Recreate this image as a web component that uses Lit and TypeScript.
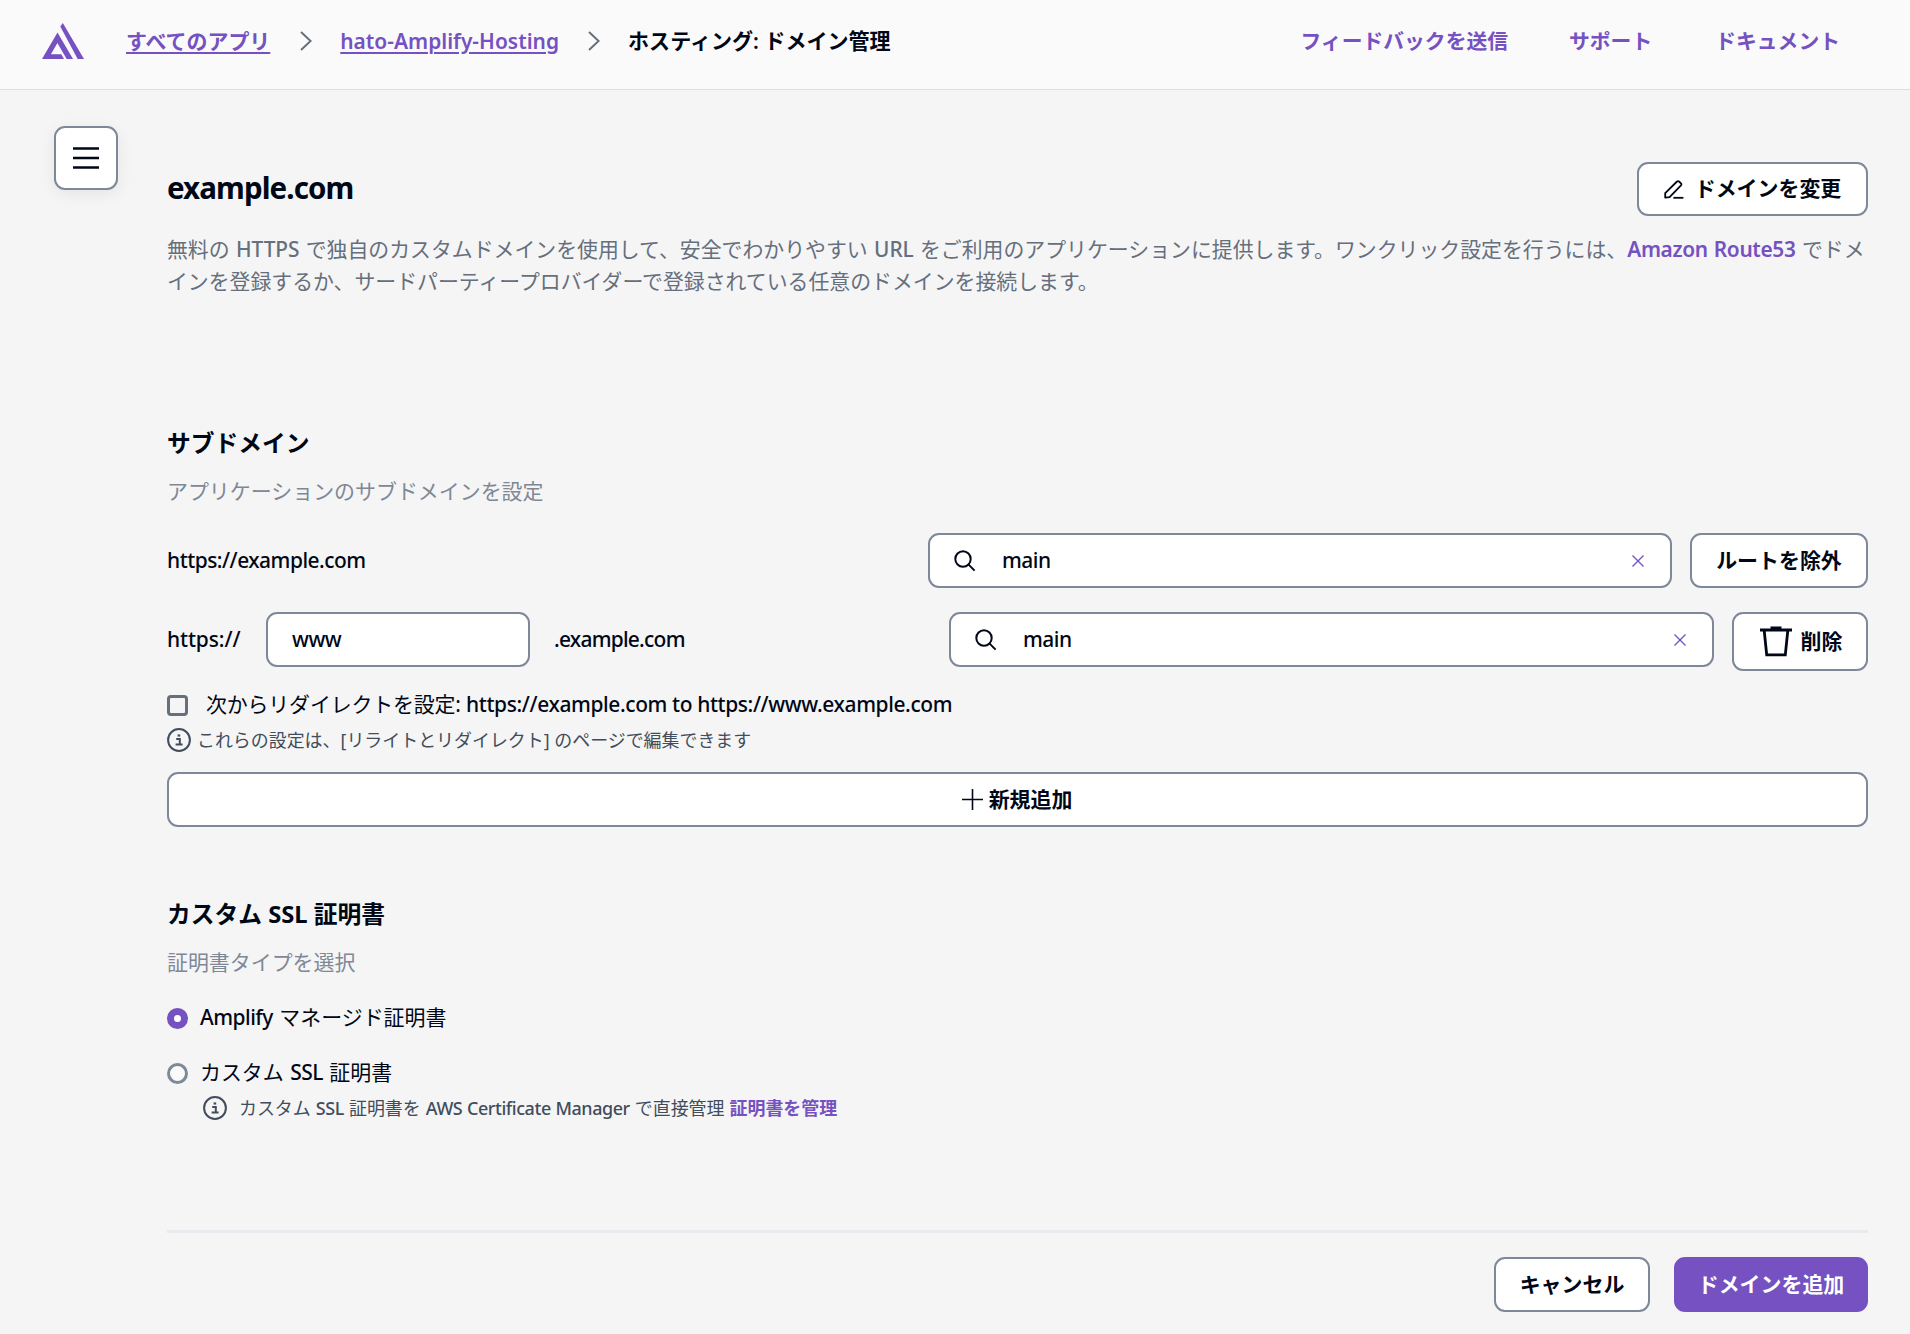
import { LitElement, html, css } from "lit";
import { customElement } from "lit/decorators.js";

const infoIcon = html`<svg class="info" viewBox="0 0 24 24" fill="none">
  <circle cx="12" cy="12" r="10.9" stroke="#414d5c" stroke-width="2" />
  <path d="M9.2 10.9h3.6v5.6M8.6 16.4h7" stroke="#414d5c" stroke-width="2" />
  <path d="M10.6 6.4h2.6v2.2h-2.6z" fill="#414d5c" />
</svg>`;

const chevron = html`<svg class="chevron" viewBox="0 0 12 20" fill="none">
  <path d="M1 1l9.6 9L1 19" stroke="#656f7d" stroke-width="2" />
</svg>`;

const searchIcon = html`<svg class="search" viewBox="0 0 22 22" fill="none" stroke="#000716">
  <circle cx="9" cy="9" r="7.7" stroke-width="2" />
  <path d="M14.4 14.4l6.2 6.2" stroke-width="2" />
</svg>`;

const clearIcon = html`<svg class="clear" viewBox="0 0 12 12" fill="none">
  <path d="M.5.5l11 11M11.5.5l-11 11" stroke="#7551c2" stroke-width="1.4" />
</svg>`;

@customElement("app-root")
export class AppRoot extends LitElement {
  static styles = css`
    :host {
      display: block;
      height: 1334px;
      overflow: hidden;
      background: #f5f5f5;
      color: #000716;
      font-family: "Noto Sans", "Noto Sans CJK JP", sans-serif;
      font-size: 20.95px;
      line-height: 32px;
    }
    * { box-sizing: border-box; }
    svg { display: block; flex: none; }
    a { color: #7551c2; font-weight: 600; text-decoration: none; }
    header {
      height: 90px;
      padding: 0 70px 8px 42px;
      border-bottom: 1px solid #dedee3;
      background: #fafafa;
      display: flex;
      align-items: center;
      white-space: nowrap;
    }
    .logo { width: 42px; height: 37px; margin: 2px 42px 0 0; }
    .crumb { text-decoration: underline; text-decoration-thickness: 2px; text-underline-offset: 3px; }
    .chevron { width: 12px; height: 20px; margin: 0 28px 0 30px; }
    .crumb + .chevron ~ .chevron { margin-left: 29px; }
    .current { font-weight: 600; font-size: 21.05px; }
    nav { margin-left: auto; display: flex; font-size: 20.8px; }
    .support { margin: 0 63px 0 61px; }
    .body { display: flex; padding: 36px 42px 0 54px; }
    .menu {
      width: 64px;
      height: 64px;
      flex: none;
      margin-right: 49px;
      border: 2px solid #7d8998;
      border-radius: 11px;
      background: #fff;
      box-shadow: 0 4px 16px rgba(0, 7, 22, 0.07);
      display: flex;
      align-items: center;
      justify-content: center;
    }
    main { flex: 1; min-width: 0; display: flex; flex-direction: column; }
    .head { display: flex; justify-content: space-between; align-items: center; margin-top: 36px; }
    h1, h2, p { margin: 0; }
    h1 { font-size: 29.5px; font-weight: 700; line-height: 40px; letter-spacing: -0.9px; padding-bottom: 2px; }
    h2 { font-size: 23.75px; font-weight: 700; line-height: 32px; }
    .en { font-weight: 500; letter-spacing: -0.5px; }
    .caps { font-weight: 500; letter-spacing: -0.1px; }
    .en-s { font-weight: 500; letter-spacing: -0.42px; }
    .url { font-weight: 500; letter-spacing: -0.38px; }
    .tail { letter-spacing: -0.75px; }
    .r53 { letter-spacing: -0.35px; }
    .btn {
      height: 55px;
      padding: 0 24px;
      border: 2px solid #7d8998;
      border-radius: 11px;
      background: #fff;
      font-weight: 600;
      display: flex;
      align-items: center;
      justify-content: center;
      white-space: nowrap;
    }
    .btn span { padding-bottom: 2px; }
    .edit { width: 231px; height: 54px; gap: 11px; }
    .lede { margin-top: 17px; color: #656f7d; font-size: 20.88px; word-spacing: 1px; line-height: 32px; white-space: nowrap; }
    .sub { margin-top: 130px; }
    .hint { color: #7f8896; margin: 16px 0 1px; }
    .row { display: flex; align-items: flex-start; }
    .root-row { margin-top: 24px; padding-top: 1px; }
    .sub-row { margin-top: 24px; }
    .label { line-height: 54px; }
    .scheme { width: 75px; letter-spacing: -0.1px; }
    .field {
      height: 55px;
      border: 2px solid #7d8998;
      border-radius: 11px;
      background: #fff;
      padding: 0 26px 0 24px;
      display: flex;
      align-items: center;
    }
    .field .en { padding-bottom: 1px; }
    .wide { margin-left: auto; }
    .w1 { width: 744px; margin-right: 18px; }
    .w2 { width: 765px; margin-right: 18px; }
    .prefix { width: 264px; margin: 0 24px 0 24px; }
    .search { width: 22px; height: 22px; margin-right: 26px; }
    .clear { width: 12px; height: 12px; margin-left: auto; }
    .exclude { width: 178px; }
    .delete { width: 136px; height: 59px; gap: 9px; padding: 0 23px 0 25px; }
    .check { display: flex; align-items: center; height: 32px; margin-top: 18px; }
    .check .text { padding-bottom: 2px; letter-spacing: -0.16px; }
    .box { width: 21px; height: 21px; border: 3px solid #656f7d; border-radius: 4px; margin-right: 18px; }
    .note { display: flex; align-items: center; font-size: 17.95px; color: #414d5c; }
    .info { width: 24px; height: 24px; }
    .note-a { height: 32px; gap: 6px; margin-top: 3px; }
    .add { margin-top: 16px; gap: 6px; padding-right: 25px; }
    .ssl { margin-top: 71px; }
    .radio { display: flex; align-items: center; height: 32px; gap: 12px; }
    .radio .text { padding-bottom: 2px; word-spacing: 1px; }
    .first { margin-top: 23px; }
    .second { margin-top: 23px; }
    .dot { width: 21px; height: 21px; border-radius: 50%; border: 3px solid #7d8998; background: #fafafa; }
    .on { border: 7.5px solid #7551c2; background: #fff; }
    .note-b { height: 32px; padding-left: 36px; gap: 12px; margin-top: 3px; white-space: pre; word-spacing: 0.4px; }
    .rule { height: 3px; background: #e9e9ef; margin-top: 106px; }
    .foot { display: flex; justify-content: flex-end; gap: 24px; margin-top: 24px; }
    .cancel { width: 156px; }
    .primary { width: 194px; border-color: #7551c2; background: #7551c2; color: #fff; }
  `;

  render() {
    return html`
      <header>
        <svg class="logo" viewBox="0 0 42 37" fill="#7551c2">
          <path d="M15.5 9.5L31 36h-6.3L15.4 19.9 8.9 31.3h10.4L22 36H0z" />
          <path d="M18.3 3.4L20.8 0 42 36h-6.3z" />
        </svg>
        <a class="crumb">すべてのアプリ</a>${chevron}<a class="crumb">hato-Amplify-Hosting</a>${chevron}<span
          class="current">ホスティング: ドメイン管理</span>
        <nav><a>フィードバックを送信</a><a class="support">サポート</a><a>ドキュメント</a></nav>
      </header>
      <div class="body">
        <div class="menu">
          <svg width="26" height="24" viewBox="0 0 26 24" stroke="#000716" stroke-width="2.6"><path d="M0 2.5h26M0 12h26M0 21.5h26" /></svg>
        </div>
        <main>
          <div class="head">
            <h1>example.com</h1>
            <div class="btn edit">
              <svg width="20" height="19" viewBox="0 0 20 19" fill="none" stroke="#000716" stroke-width="1.8"><path d="M1.2 17.6v-4.4L13 1.5q1-.8 2 0l2 1.8q.9.9 0 2L5.6 17.2z" stroke-linejoin="round" /><path d="M9.4 17.8h10" /></svg>
              <span>ドメインを変更</span>
            </div>
          </div>
          <p class="lede">無料の <span class="caps">HTTPS</span> で独自のカスタムドメインを使用して、安全でわかりやすい <span class="caps">URL</span> をご利用のアプリケーションに提供します。ワンクリック設定を行うには、<a class="r53">Amazon Route53</a> でドメ<br />インを登録するか、サードパーティープロバイダーで登録されている任意のドメインを接続します。</p>
          <h2 class="sub">サブドメイン</h2>
          <p class="hint">アプリケーションのサブドメインを設定</p>
          <div class="row root-row">
            <span class="label en">https://example.com</span>
            <div class="field wide w1">${searchIcon}<span class="en">main</span>${clearIcon}</div>
            <div class="btn exclude"><span>ルートを除外</span></div>
          </div>
          <div class="row sub-row">
            <span class="label en scheme">https://</span>
            <div class="field prefix"><span class="en">www</span></div>
            <span class="label en tail">.example.com</span>
            <div class="field wide w2">${searchIcon}<span class="en">main</span>${clearIcon}</div>
            <div class="btn delete">
              <svg width="32" height="31" viewBox="0 0 32 31" fill="none" stroke="#000716" stroke-width="2.8"><path d="M0 4h32M10.5 1.8h11M4.2 4.5l2.5 24.4h18.6L27.8 4.5" /></svg>
              <span>削除</span>
            </div>
          </div>
          <div class="check"><span class="box"></span><span class="text">次からリダイレクトを設定: <span class="url">https://example.com to https://www.example.com</span></span></div>
          <div class="note note-a">${infoIcon}<span>これらの設定は、[リライトとリダイレクト] のページで編集できます</span></div>
          <div class="btn add">
            <svg width="21" height="21" viewBox="0 0 21 21" stroke="#000716" stroke-width="1.6"><path d="M10.5 0v21M0 10.5h21" /></svg>
            <span>新規追加</span>
          </div>
          <h2 class="ssl">カスタム SSL 証明書</h2>
          <p class="hint">証明書タイプを選択</p>
          <div class="radio first"><span class="dot on"></span><span class="text"><span class="en">Amplify</span> マネージド証明書</span></div>
          <div class="radio second"><span class="dot"></span><span class="text">カスタム <span class="en">SSL</span> 証明書</span></div>
          <div class="note note-b">${infoIcon}<span>カスタム <span class="en-s">SSL</span> 証明書を <span class="en-s">AWS Certificate Manager</span> で直接管理 <a>証明書を管理</a></span></div>
          <div class="rule"></div>
          <div class="foot">
            <div class="btn cancel"><span>キャンセル</span></div>
            <div class="btn primary"><span>ドメインを追加</span></div>
          </div>
        </main>
      </div>
    `;
  }
}
